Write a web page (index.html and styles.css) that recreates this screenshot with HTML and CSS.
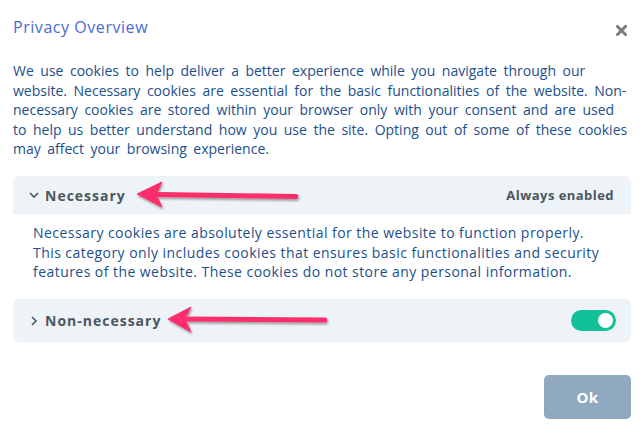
FILE: index.html
```html
<!DOCTYPE html>
<html>

<head>
    <title>Privacy Overview</title>
    <meta charset="utf-8">
    <meta name="viewport" content="width=device-width, initial-scale=1.0">
    <link rel="stylesheet" href="styles.css">
</head>

<body>

    <div class="modal">
        <div class="modal-head">
            <h4 class="title">Privacy Overview</h4>
            <button class="close" aria-label="Close">
                <svg width="11" height="11" viewBox="0 0 11 11">
                    <path d="M1.5 1.5 L9.5 9.5 M9.5 1.5 L1.5 9.5" stroke="#7b7b7b" stroke-width="3" stroke-linecap="square" />
                </svg>
            </button>
        </div>

        <p class="intro">We use cookies to help deliver a better experience while you navigate through our website. Necessary cookies are essential for the basic functionalities of the website. Non-necessary cookies are stored within your browser only with your consent and are used to help us better understand how you use the site. Opting out of some of these cookies may affect your browsing experience.</p>

        <div class="tab open">
            <div class="tab-head">
                <svg class="chev" width="10" height="10" viewBox="0 0 10 10">
                    <path d="M1 3 L5 7 L9 3" fill="none" stroke="#4b5660" stroke-width="1.6" />
                </svg>
                <span class="tab-title">Necessary</span>
                <span class="always">Always enabled</span>
            </div>
            <div class="tab-body">
                <p>Necessary cookies are absolutely essential for the website to function properly. This category only includes cookies that ensures basic functionalities and security features of the website. These cookies do not store any personal information.</p>
            </div>
        </div>

        <div class="tab">
            <div class="tab-head">
                <svg class="chev" width="10" height="10" viewBox="0 0 10 10">
                    <path d="M3 1 L7 5 L3 9" fill="none" stroke="#4b5660" stroke-width="1.6" />
                </svg>
                <span class="tab-title">Non-necessary</span>
                <label class="switch"><span class="knob"></span></label>
            </div>
        </div>

        <div class="foot">
            <button class="ok">Ok</button>
        </div>
    </div>

    <!-- annotation arrows drawn on top of the screenshot -->
    <svg class="marks" width="644" height="431" viewBox="0 0 644 431">
        <defs>
            <filter id="shade" x="-10%" y="-50%" width="120%" height="200%">
                <feDropShadow dx="1" dy="2" stdDeviation="1.2" flood-color="#000" flood-opacity="0.35" />
            </filter>
        </defs>
        <g fill="#fc2f6c" stroke="#fc2f6c" filter="url(#shade)">
            <line x1="158" y1="194.5" x2="296" y2="196.5" stroke-width="5" stroke-linecap="round" />
            <path d="M137 194 L162 182 L156 194.5 L162 207 Z" stroke-width="1" stroke-linejoin="round" />
            <line x1="188" y1="319" x2="325" y2="320" stroke-width="5" stroke-linecap="round" />
            <path d="M168 319 L191 307 L185 319 L191 332 Z" stroke-width="1" stroke-linejoin="round" />
        </g>
    </svg>

</body>

</html>
```

FILE: styles.css
```css
body {
    margin: 0;
    background-color: #ffffff;
    font-family: "Open Sans", "Liberation Sans", sans-serif;
}

.modal {
    padding: 17px 13px 0;
}

.modal-head {
    display: flex;
    justify-content: space-between;
    align-items: center;
    height: 20px;
}

.title {
    margin: 0;
    font-size: 16px;
    font-weight: 400;
    line-height: 20px;
    letter-spacing: 0.55px;
    color: #4a6bd6;
}

.close {
    border: none;
    background: none;
    padding: 0;
    margin: 6px 4px 0 0;
    display: flex;
}

.intro {
    margin: 24px 0 0;
    font-size: 14px;
    line-height: 19.5px;
    word-spacing: 2.9px;
    color: #1c4f8b;
}

.tab {
    background-color: #eef3f8;
    border-radius: 6px;
}

.tab.open {
    margin-top: 17.5px;
    background-color: #ffffff;
}

.tab-head {
    display: flex;
    align-items: center;
    height: 38px;
    padding: 0 17px 0 16px;
    background-color: #eef3f8;
    border-radius: 6px 6px 0 0;
}

.tab:not(.open) .tab-head {
    height: 43px;
    border-radius: 6px;
    padding-right: 15px;
}

.chev {
    margin-right: 6px;
}

.tab-title {
    font-size: 14px;
    font-weight: 700;
    letter-spacing: 1px;
    color: #4b5660;
}

.always {
    margin-left: auto;
    font-size: 13px;
    font-weight: 700;
    letter-spacing: 0.45px;
    color: #4b5660;
}

.tab-body {
    padding: 9px 20px 17.5px;
}

.tab-body p {
    margin: 0;
    font-size: 14px;
    line-height: 19.5px;
    letter-spacing: 0.447px;
    color: #1c4f8b;
}

.switch {
    margin-left: auto;
    width: 45px;
    height: 21px;
    border-radius: 11px;
    background-color: #12c197;
    display: flex;
    align-items: center;
    justify-content: flex-end;
    padding-right: 3px;
    box-sizing: border-box;
}

.knob {
    width: 15px;
    height: 15px;
    border-radius: 50%;
    background-color: #ffffff;
}

.foot {
    display: flex;
    justify-content: flex-end;
    margin-top: 33px;
}

.ok {
    width: 87px;
    height: 44px;
    border: none;
    border-radius: 5px;
    background-color: #90a9c1;
    color: #ffffff;
    font-family: inherit;
    font-size: 15px;
    font-weight: 700;
    letter-spacing: 0.5px;
}

.marks {
    position: absolute;
    top: 0;
    left: 0;
    pointer-events: none;
}
```
